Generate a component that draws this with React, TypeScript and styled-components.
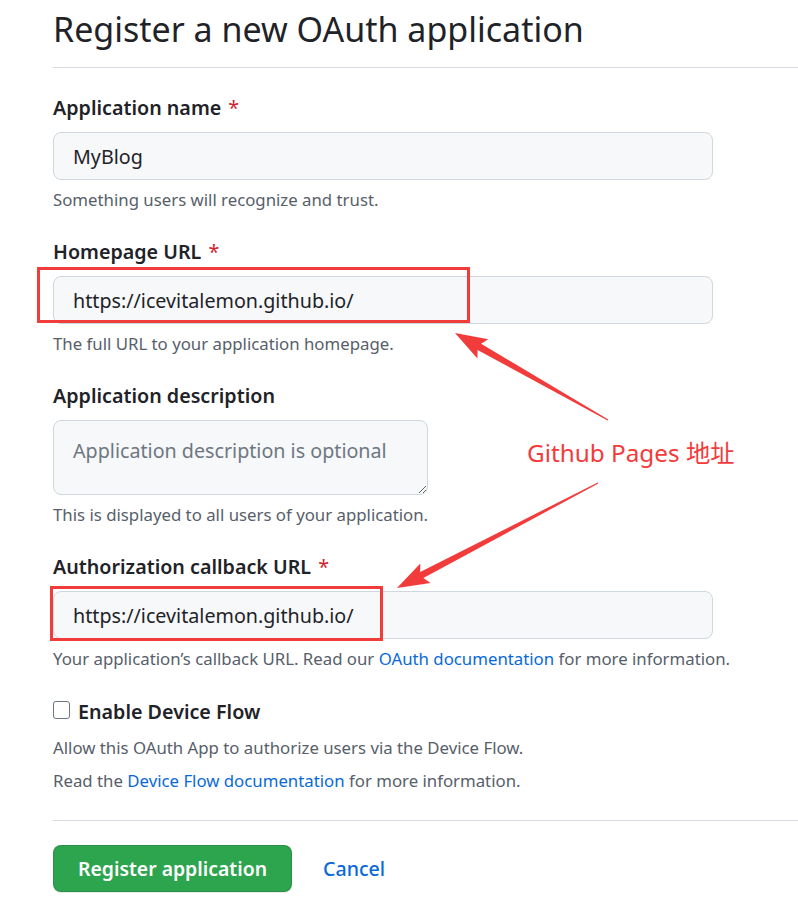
import React from 'react';
import styled, { createGlobalStyle } from 'styled-components';

const Global = createGlobalStyle`
  html, body { margin: 0; padding: 0; background: #ffffff; }
  body {
    font-family: "Noto Sans", "Noto Sans CJK SC", sans-serif;
    color: #1f2328;
  }
`;

const Page = styled.div`
  position: relative;
  width: 798px;
  height: 924px;
  overflow: hidden;
  padding-left: 53px;
  box-sizing: border-box;
`;

const Title = styled.h1`
  margin: 0;
  padding: 4px 0 13px;
  line-height: 50px;
  font-size: 34px;
  font-weight: 400;
  color: #1f2328;
  border-bottom: 1px solid #d8dee4;
`;

const Form = styled.form`
  display: flex;
  flex-direction: column;
  margin-top: 25px;
`;

const Group = styled.div<{ $last?: boolean }>`
  display: flex;
  flex-direction: column;
  align-items: flex-start;
  margin-bottom: ${(p) => (p.$last ? 0 : 25)}px;
`;

const Label = styled.label`
  display: block;
  font-size: 19.7px;
  font-weight: 600;
  line-height: 30px;
  color: #1f2328;
`;

const Required = styled.span`
  color: #cf222e;
  margin-left: 7px;
  font-weight: 400;
`;

const fieldBase = `
  display: block;
  box-sizing: border-box;
  margin-top: 9px;
  font-family: "Noto Sans", sans-serif;
  font-size: 19.7px;
  color: #1f2328;
  background: #f6f8fa;
  border: 1px solid #d0d7de;
  border-radius: 8px;
  outline: none;
`;

const TextInput = styled.input`
  ${fieldBase}
  width: 660px;
  height: 48px;
  padding: 0 19px;
`;

const TextArea = styled.textarea`
  ${fieldBase}
  width: 375px;
  height: 75px;
  padding: 17px 19px 0;
  line-height: 26px;
  resize: both;
  &::placeholder { color: #6e7781; }
`;

const Note = styled.p<{ $gap?: number }>`
  margin: ${(p) => p.$gap ?? 8}px 0 0;
  font-size: 16.8px;
  line-height: 24px;
  color: #57606a;
`;

const Link = styled.a`
  color: #0969da;
  text-decoration: none;
`;

const CheckRow = styled.label`
  display: flex;
  align-items: center;
  gap: 8px;
  font-size: 19.7px;
  font-weight: 600;
  line-height: 32px;
  color: #1f2328;
`;

const Box = styled.span`
  display: inline-block;
  width: 15px;
  height: 16px;
  border: 1.5px solid #6e7781;
  border-radius: 3px;
  background: #fff;
  margin-top: -4px;
`;

const Divider = styled.hr`
  border: 0;
  border-top: 1px solid #d8dee4;
  margin: 27px 0 24px;
  width: 745px;
`;

const Actions = styled.div`
  display: flex;
  align-items: center;
  gap: 31px;
`;

const Primary = styled.button`
  width: 239px;
  height: 47px;
  box-sizing: border-box;
  background: #2da44e;
  border: 1px solid rgba(27, 31, 36, 0.15);
  border-radius: 8px;
  color: #ffffff;
  font-family: "Noto Sans", sans-serif;
  font-size: 19.4px;
  font-weight: 600;
  box-shadow: 0 1px 0 rgba(27, 31, 36, 0.1);
`;

const CancelLink = styled.a`
  color: #0969da;
  font-size: 19.6px;
  font-weight: 500;
  text-decoration: none;
`;

const Overlay = styled.svg`
  position: absolute;
  left: 0;
  top: 0;
  pointer-events: none;
`;

const Annotation = styled.span`
  position: absolute;
  left: 527px;
  top: 436px;
  font-family: "Noto Sans", "Noto Sans CJK SC", sans-serif;
  font-size: 24.3px;
  line-height: 34px;
  color: #f23b3b;
  white-space: nowrap;
`;

type Pt = [number, number];

function arrowPoints(tail: Pt, tip: Pt, headLen = 28, headHalf = 11, tailHalf = 0.6, neckHalf = 3.5): string {
  const dx = tip[0] - tail[0];
  const dy = tip[1] - tail[1];
  const len = Math.hypot(dx, dy);
  const ux = dx / len;
  const uy = dy / len;
  const nx = -uy;
  const ny = ux;
  const bx = tip[0] - ux * headLen;
  const by = tip[1] - uy * headLen;
  const wx = tip[0] - ux * (headLen + 4);
  const wy = tip[1] - uy * (headLen + 4);
  const pts: Pt[] = [
    [tail[0] + nx * tailHalf, tail[1] + ny * tailHalf],
    [bx + nx * neckHalf, by + ny * neckHalf],
    [wx + nx * headHalf, wy + ny * headHalf],
    tip,
    [wx - nx * headHalf, wy - ny * headHalf],
    [bx - nx * neckHalf, by - ny * neckHalf],
    [tail[0] - nx * tailHalf, tail[1] - ny * tailHalf],
  ];
  return pts.map((p) => `${p[0].toFixed(1)},${p[1].toFixed(1)}`).join(' ');
}

export default function App() {
  return (
    <>
      <Global />
      <Page>
        <Title>Register a new OAuth application</Title>
        <Form onSubmit={(e) => e.preventDefault()}>
          <Group>
            <Label>
              Application name<Required>*</Required>
            </Label>
            <TextInput defaultValue="MyBlog" />
            <Note>Something users will recognize and trust.</Note>
          </Group>
          <Group>
            <Label>
              Homepage URL<Required>*</Required>
            </Label>
            <TextInput defaultValue="https://icevitalemon.github.io/" />
            <Note>The full URL to your application homepage.</Note>
          </Group>
          <Group>
            <Label>Application description</Label>
            <TextArea placeholder="Application description is optional" />
            <Note>This is displayed to all users of your application.</Note>
          </Group>
          <Group>
            <Label>
              Authorization callback URL<Required>*</Required>
            </Label>
            <TextInput defaultValue="https://icevitalemon.github.io/" />
            <Note>
              Your application’s callback URL. Read our <Link href="#">OAuth documentation</Link> for more
              information.
            </Note>
          </Group>
          <Group $last>
            <CheckRow>
              <Box />
              Enable Device Flow
            </CheckRow>
            <Note>Allow this OAuth App to authorize users via the Device Flow.</Note>
            <Note $gap={9}>
              Read the <Link href="#">Device Flow documentation</Link> for more information.
            </Note>
          </Group>
          <Divider />
          <Actions>
            <Primary type="submit">Register application</Primary>
            <CancelLink href="#">Cancel</CancelLink>
          </Actions>
        </Form>

        <Overlay width={798} height={924} viewBox="0 0 798 924">
          <rect x={38.5} y={268.5} width={430} height={53} fill="none" stroke="#f23b3b" strokeWidth={3} />
          <rect x={51.5} y={587.5} width={330} height={52} fill="none" stroke="#f23b3b" strokeWidth={3} />
          <polygon points={arrowPoints([608, 420], [455, 333])} fill="#f23b3b" />
          <polygon points={arrowPoints([598, 483], [397, 588])} fill="#f23b3b" />
        </Overlay>
        <Annotation>Github Pages 地址</Annotation>
      </Page>
    </>
  );
}
